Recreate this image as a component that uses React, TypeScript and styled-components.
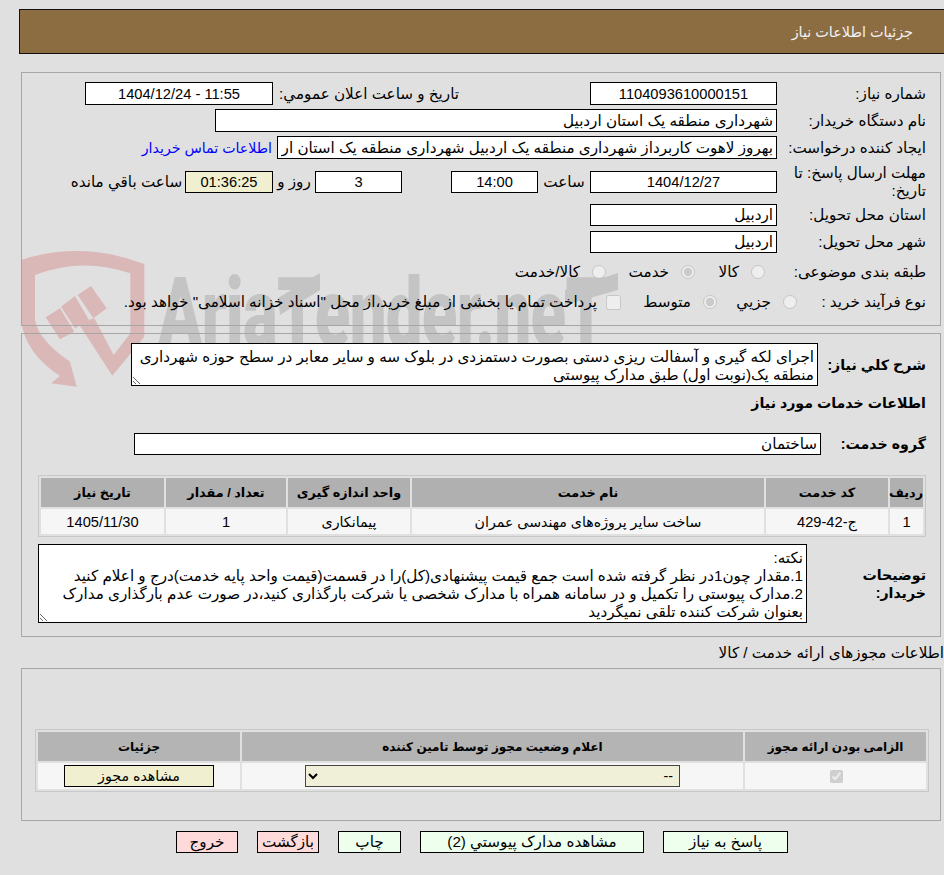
import styled, { createGlobalStyle } from 'styled-components';

const GlobalStyle = createGlobalStyle`
  html, body {
    margin: 0;
    background: #e0e0e0;
  }
  body {
    font-family: 'Liberation Sans', 'DejaVu Sans', sans-serif;
    font-size: 15.2px;
    color: #000;
  }
`;

const Page = styled.div`
  position: relative;
  width: 944px;
  height: 875px;
  overflow: hidden;
  direction: rtl;
`;

const Watermark = styled.div`
  position: absolute;
  left: 0;
  top: 0;
  z-index: 0;
`;

const Logo = styled.svg`
  position: absolute;
  left: 15px;
  top: 240px;
  width: 640px;
  height: 170px;
`;

const WatermarkText = styled.div`
  position: absolute;
  left: 158px;
  top: 268px;
  direction: ltr;
  font-family: Roboto, sans-serif;
  font-weight: 900;
  font-size: 96px;
  line-height: 90px;
  letter-spacing: -1px;
  color: #c4c4c4;
  white-space: nowrap;
  transform-origin: left center;
  transform: scaleX(0.68);
`;

const Content = styled.div`
  position: relative;
  z-index: 1;
  padding-top: 9px;
`;

const Header = styled.div`
  box-sizing: border-box;
  height: 45px;
  margin-left: 19px;
  margin-right: -2px;
  padding-right: 32px;
  background: #8c6d42;
  border: 1px solid #111;
  color: #f2f2f2;
  font-size: 14.4px;
  display: flex;
  align-items: center;
`;

const Panel = styled.div<{ $top: number; $pad: string }>`
  box-sizing: border-box;
  margin: ${p => p.$top}px 3px 0 3px;
  margin-left: 21px;
  padding: ${p => p.$pad};
  border: 1px solid #a6a6a6;
  display: flex;
  flex-direction: column;
  align-items: flex-start;
`;

const Row = styled.div<{ $h?: number; $mt?: number }>`
  display: flex;
  align-items: center;
  height: ${p => p.$h ?? 23}px;
  margin-top: ${p => p.$mt ?? 0}px;
`;

const Label = styled.div<{ $w?: number; $bold?: boolean }>`
  flex: none;
  width: ${p => p.$w ?? 149}px;
  line-height: 18px;
  font-size: ${p => (p.$bold ? '14.2px' : 'inherit')};
  font-weight: ${p => (p.$bold ? 700 : 400)};
`;

const Text = styled.span<{ $w?: number; $ml?: number; $center?: boolean }>`
  flex: none;
  width: ${p => (p.$w ? `${p.$w}px` : 'auto')};
  margin-left: ${p => p.$ml ?? 0}px;
  text-align: ${p => (p.$center ? 'center' : 'right')};
  white-space: nowrap;
`;

const Field = styled.input<{ $w: number; $ml?: number; $center?: boolean; $tint?: boolean; $num?: boolean }>`
  box-sizing: border-box;
  flex: none;
  width: ${p => p.$w}px;
  height: 100%;
  margin: 0 0 0 ${p => p.$ml ?? 0}px;
  padding: 1px 3px;
  border: 1px solid #000;
  border-radius: 0;
  outline: none;
  background: ${p => (p.$tint ? '#f0f0d0' : '#fff')};
  font: inherit;
  font-size: ${p => (p.$num ? '14.67px' : 'inherit')};
  color: #000;
  text-align: ${p => (p.$center ? 'center' : 'right')};
`;

const ContactLink = styled.a`
  margin-right: 5px;
  color: #0000ff;
  font-size: 14.2px;
  text-decoration: none;
  white-space: nowrap;
`;

const Option = styled.label<{ $w?: number }>`
  flex: none;
  display: flex;
  align-items: center;
  width: ${p => (p.$w ? `${p.$w}px` : 'auto')};
  white-space: nowrap;
`;

const Radio = styled.input.attrs({ type: 'radio', disabled: true })`
  flex: none;
  width: 14px;
  height: 14px;
  margin: 0 12px 0 12px;
`;

const Check = styled.input.attrs({ type: 'checkbox', disabled: true })`
  flex: none;
  width: 15px;
  height: 15px;
  margin: 0 12px 0 9px;
`;

const Area = styled.textarea<{ $w: number; $h: number }>`
  box-sizing: border-box;
  flex: none;
  display: block;
  width: ${p => p.$w}px;
  height: ${p => p.$h}px;
  margin: 0;
  padding: 4px 3px 0;
  border: 1px solid #000;
  border-radius: 0;
  outline: none;
  background: #fff;
  font: inherit;
  line-height: 18px;
  color: #000;
  overflow: hidden;
`;

const Heading = styled.div`
  margin-top: 6px;
  height: 22px;
  line-height: 22px;
  font-size: 14.2px;
  font-weight: 700;
`;

const Table = styled.table<{ $w: number; $mt?: number }>`
  box-sizing: border-box;
  width: ${p => p.$w}px;
  table-layout: fixed;
  border-collapse: separate;
  border-spacing: 2px;
  border: 1px solid #c8c8c8;
  margin-top: ${p => p.$mt ?? 0}px;
`;

const Th = styled.th<{ $w: number; $dark?: boolean }>`
  width: ${p => p.$w}px;
  height: 29px;
  padding: 0;
  background: ${p => (p.$dark ? '#b4b4b4' : '#b0b0b0')};
  font-size: ${p => (p.$dark ? 12 : 12.8)}px;
  font-weight: 700;
  text-align: center;
`;

const Td = styled.td<{ $h?: number; $num?: boolean }>`
  height: ${p => p.$h ?? 25}px;
  padding: 0;
  background: #f6f6f6;
  font-size: ${p => (p.$num ? '14.67px' : '14.2px')};
  text-align: center;
  vertical-align: middle;
`;

const StatusSelect = styled.select`
  display: block;
  box-sizing: border-box;
  width: 375px;
  height: 22px;
  margin: 0 auto;
  padding: 0 2px;
  background-color: #f0f0d8;
  border: 1px solid #444;
  border-radius: 0;
  font: inherit;
  color: #000;
`;

const CellButton = styled.button`
  display: block;
  box-sizing: border-box;
  width: 150px;
  height: 22px;
  margin: 0 auto;
  padding: 0;
  background: #f0f0d0;
  border: 1px solid #000;
  font: inherit;
  color: #000;
`;

const LicenseTitle = styled.div`
  height: 31px;
  line-height: 31px;
  white-space: nowrap;
`;

const Actions = styled.div`
  display: flex;
  justify-content: center;
  gap: 19px;
  margin: 10px 0 0 20px;
`;

const ActionButton = styled.button<{ $w: number; $danger?: boolean }>`
  box-sizing: border-box;
  width: ${p => p.$w}px;
  height: 22px;
  padding: 0;
  background: ${p => (p.$danger ? '#ffdada' : '#eeffee')};
  border: 1px solid #000;
  font: inherit;
  color: #000;
`;

const App = () => (
  <Page>
    <GlobalStyle />
    <Watermark>
      <WatermarkText>AriaTender.neT</WatermarkText>
      <Logo viewBox="0 0 1920 510">
        <g fill="#dbb8b8">
          <path d="M18 60 Q200 0 388 72 L388 290 L292 407 L190 250 L238 235 L296 345 L346 280 L346 100 Q200 50 60 105 L60 240 Q70 300 165 365 L185 440 L108 430 L135 408 Q30 340 18 240 Z" />
          <path d="M92 232 L135 205 L178 275 L135 298 Z" />
          <path d="M138 200 L180 168 L222 240 L180 265 Z" />
          <path d="M188 165 L228 138 L275 205 L235 235 Z" />
        </g>
        <g fill="#c4c4c4">
          <path d="M789 174 L915 99 L915 150 L795 225 Z" />
          <path d="M1650 150 L1809 99 L1809 150 L1650 195 Z" />
        </g>
      </Logo>
    </Watermark>
    <Content>
      <Header>جزئیات اطلاعات نیاز</Header>

      <Panel $top={18} $pad="9px 14px 12px 0">
        <Row>
          <Label>شماره نیاز:</Label>
          <Field $w={187} $center $num readOnly value="1104093610000151" />
          <Text $w={131} />
          <Text $ml={5} $w={181}>تاریخ و ساعت اعلان عمومي:</Text>
          <Field $w={188} $center $num readOnly value="11:55 - 1404/12/24" />
        </Row>
        <Row $mt={4}>
          <Label>نام دستگاه خریدار:</Label>
          <Field $w={562} readOnly value="شهرداری منطقه یک استان اردبیل" />
        </Row>
        <Row $mt={4}>
          <Label>ایجاد کننده درخواست:</Label>
          <Field $w={500} readOnly value="بهروز لاهوت کاربرداز شهرداری منطقه یک اردبیل شهرداری منطقه یک استان اردبیل" />
          <ContactLink>اطلاعات تماس خریدار</ContactLink>
        </Row>
        <Row $h={37} $mt={4}>
          <Label>مهلت ارسال پاسخ: تا تاریخ:</Label>
          <Row $h={22}>
            <Field $w={187} $center $num readOnly value="1404/12/27" />
            <Text $w={52} $center>ساعت</Text>
            <Field $w={87} $center $num readOnly value="14:00" />
            <Text $w={49} />
            <Field $w={87} $center $num readOnly value="3" />
            <Text $w={42} $center>روز و</Text>
            <Field $w={88} $center $tint $num readOnly value="01:36:25" />
            <Text $w={117} $center>ساعت باقي مانده</Text>
          </Row>
        </Row>
        <Row $h={22} $mt={4}>
          <Label>استان محل تحویل:</Label>
          <Field $w={187} readOnly value="اردبیل" />
        </Row>
        <Row $h={22} $mt={5}>
          <Label>شهر محل تحویل:</Label>
          <Field $w={187} readOnly value="اردبیل" />
        </Row>
        <Row $h={22} $mt={8}>
          <Label>طبقه بندی موضوعی:</Label>
          <Option $w={70}><Radio />کالا</Option>
          <Option $w={89}><Radio defaultChecked />خدمت</Option>
          <Option><Radio />کالا/خدمت</Option>
        </Row>
        <Row $h={22} $mt={8}>
          <Label $w={117}>نوع فرآیند خرید :</Label>
          <Option $w={80}><Radio />جزيي</Option>
          <Option $w={96}><Radio defaultChecked />متوسط</Option>
          <Option>
            <Check />
            پرداخت تمام یا بخشی از مبلغ خرید،از محل "اسناد خزانه اسلامی" خواهد بود.
          </Option>
        </Row>
      </Panel>

      <Panel $top={7} $pad="9px 14px 13px 0">
        <Row $h={43}>
          <Label $w={108} $bold>شرح کلي نیاز:</Label>
          <Area
            $w={687}
            $h={43}
            readOnly
            value="اجرای لکه گیری و آسفالت ریزی دستی بصورت دستمزدی در بلوک سه و سایر معابر در سطح حوزه شهرداری منطقه یک(نوبت اول) طبق مدارک پیوستی"
          />
        </Row>
        <Heading>اطلاعات خدمات مورد نیاز</Heading>
        <Row $h={22} $mt={19}>
          <Label $w={105} $bold>گروه خدمت:</Label>
          <Field $w={687} readOnly value="ساختمان" />
        </Row>
        <Table $w={888} $mt={20}>
          <thead>
            <tr>
              <Th $w={33}>ردیف</Th>
              <Th $w={122}>کد خدمت</Th>
              <Th $w={352}>نام خدمت</Th>
              <Th $w={122}>واحد اندازه گیری</Th>
              <Th $w={120}>تعداد / مقدار</Th>
              <Th $w={123}>تاریخ نیاز</Th>
            </tr>
          </thead>
          <tbody>
            <tr>
              <Td $num>1</Td>
              <Td $num>ج-42-429</Td>
              <Td>ساخت سایر پروژه‌های مهندسی عمران</Td>
              <Td>پیمانکاری</Td>
              <Td $num>1</Td>
              <Td $num>1405/11/30</Td>
            </tr>
          </tbody>
        </Table>
        <Row $h={79} $mt={7}>
          <Label $w={119} $bold>توضیحات<br />خریدار:</Label>
          <Area
            $w={769}
            $h={79}
            readOnly
            value={'نکته:\n1.مقدار چون1در نظر گرفته شده است جمع قیمت پیشنهادی(کل)را در قسمت(قیمت واحد پایه خدمت)درج و اعلام کنید\n2.مدارک پیوستی را تکمیل و در سامانه همراه با مدارک شخصی یا شرکت بارگذاری کنید،در صورت عدم بارگذاری مدارک بعنوان شرکت کننده تلقی نمیگردید'}
          />
        </Row>
      </Panel>

      <LicenseTitle>اطلاعات مجوزهای ارائه خدمت / کالا</LicenseTitle>

      <Panel $top={0} $pad="60px 11px 28px 0">
        <Table $w={894}>
          <thead>
            <tr>
              <Th $dark $w={181}>الزامی بودن ارائه مجوز</Th>
              <Th $dark $w={501}>اعلام وضعیت مجوز توسط تامین کننده</Th>
              <Th $dark $w={202}>جزئیات</Th>
            </tr>
          </thead>
          <tbody>
            <tr>
              <Td $h={26}><input type="checkbox" disabled checked readOnly /></Td>
              <Td $h={26}>
                <StatusSelect defaultValue="--">
                  <option>--</option>
                </StatusSelect>
              </Td>
              <Td $h={26}><CellButton>مشاهده مجوز</CellButton></Td>
            </tr>
          </tbody>
        </Table>
      </Panel>

      <Actions>
        <ActionButton $w={125}>پاسخ به نیاز</ActionButton>
        <ActionButton $w={224}>مشاهده مدارک پیوستي (2)</ActionButton>
        <ActionButton $w={63}>چاپ</ActionButton>
        <ActionButton $w={62} $danger>بازگشت</ActionButton>
        <ActionButton $w={62} $danger>خروج</ActionButton>
      </Actions>
    </Content>
  </Page>
);

export default App;
